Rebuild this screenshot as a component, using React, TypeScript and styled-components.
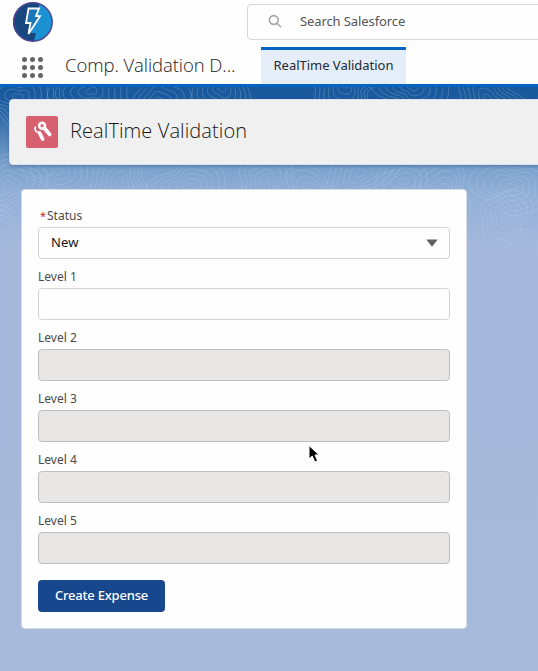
import React from "react";
import styled, { createGlobalStyle } from "styled-components";

const Global = createGlobalStyle`
  * { box-sizing: border-box; }
  html, body { margin: 0; height: 100%; overflow: hidden; }
  body { font-family: "Noto Sans", "Open Sans", sans-serif; font-size: 13px; color: #16325c; }
  button, input { font: inherit; }
`;

const Page = styled.div`
  width: 100%;
  height: 100vh;
  overflow: hidden;
  display: flex;
  flex-direction: column;
`;

const Header = styled.header`
  flex: none;
  height: 87px;
  background: #fefefe;
  border-bottom: 3px solid #0364c4;
  display: flex;
  flex-direction: column;
`;

const TopBar = styled.div`
  height: 47px;
  display: flex;
  align-items: flex-start;
  padding: 2px 0 0 13px;
`;

const Logo = styled.svg`
  width: 40px;
  height: 40px;
  flex: none;
`;

const SearchBox = styled.div`
  flex: none;
  width: 320px;
  height: 36px;
  margin: 2px 0 0 194px;
  padding: 0 0 1px 20px;
  display: flex;
  align-items: center;
  gap: 17px;
  border: 1px solid #d5d6de;
  border-radius: 4px;
  background: #fefefe;
`;

const Fit = styled.span<{ $track?: number }>`
  white-space: nowrap;
  letter-spacing: ${(p) => p.$track ?? 0}px;
`;

const SearchText = styled(Fit)`
  color: #555;
  line-height: 18px;
  padding-bottom: 1px;
`;

const NavBar = styled.nav`
  height: 37px;
  display: flex;
  align-items: stretch;
`;

const Launcher = styled.div`
  display: grid;
  grid-template-columns: repeat(3, 5px);
  grid-auto-rows: 5px;
  gap: 3px;
  margin: 10px 0 0 22px;
  width: 21px;
  height: 21px;
`;

const Dot = styled.i`
  border-radius: 50%;
  background: #666563;
`;

const AppName = styled(Fit)`
  width: 218px;
  padding-left: 22px;
  font-family: "Open Sans", sans-serif;
  font-weight: 300;
  font-size: 18.5px;
  line-height: 36px;
  color: #222;
`;

const Tab = styled.a`
  width: 145px;
  border-top: 3px solid #0364c4;
  background: #e5edf8;
  color: #222a35;
  line-height: 31px;
  text-align: center;
`;

const Main = styled.main`
  position: relative;
  flex: 1;
  background: linear-gradient(#17579b 0, #1c5b9e 14px, #7aa0cb 78px, #91afd6 105px, #a5b8dc 160px, #a7badb 100%);
`;

const Contours = styled.svg`
  position: absolute;
  inset: 0;
  width: 100%;
  height: 200px;
  fill: none;
  stroke: #d5e5f8;
  stroke-width: 0.9;
  mask-image: linear-gradient(#000, #000 65%, transparent);
`;

const PageHeader = styled.section`
  position: relative;
  height: 66px;
  margin: 12px -20px 0 9px;
  padding-left: 16px;
  display: flex;
  align-items: center;
  gap: 12px;
  background: #f0f0f0;
  border: 1px solid #dde3ea;
  border-radius: 4px;
  box-shadow: 0 2px 3px rgba(20, 60, 110, 0.3);
`;

const Tile = styled.svg`
  width: 32px;
  height: 32px;
  flex: none;
`;

const Title = styled.h1`
  margin: -2px 0 0;
  font-family: "Open Sans", sans-serif;
  font-weight: 300;
  font-size: 20px;
  line-height: 28px;
  color: #181818;
`;

const FormCard = styled.form`
  position: relative;
  width: 446px;
  height: 440px;
  margin: 24px 0 0 21px;
  padding: 17px 16px 0;
  background: #fefefe;
  border: 1px solid #d5dce8;
  border-radius: 4px;
`;

const Field = styled.div`
  height: 61px;
`;

const Label = styled.label`
  display: flex;
  height: 20px;
  line-height: 17px;
  font-size: 12px;
  color: #4b4a48;
`;

const Required = styled.abbr`
  width: 9px;
  padding-left: 2px;
  font-size: 11px;
  color: #b72a20;
`;

const Control = styled.div<{ $disabled?: boolean }>`
  height: 32px;
  padding: 0 11px 0 12px;
  display: flex;
  align-items: center;
  justify-content: space-between;
  border: 1px solid ${(p) => (p.$disabled ? "#bfbfc1" : "#d2d3dd")};
  border-radius: 4px;
  background: ${(p) => (p.$disabled ? "#e8e7e6" : "#fefefe")};
  color: #151515;
`;

const Value = styled(Fit)`
  padding-bottom: 2px;
`;

const Submit = styled.button`
  display: block;
  width: 127px;
  height: 32px;
  margin-top: 7px;
  padding: 0 0 1px;
  border: 0;
  border-radius: 4px;
  background: #17488d;
  color: #fff;
  font-size: 13px;
  font-weight: 500;
  line-height: 31px;
`;

const Pointer = styled.svg`
  position: absolute;
  left: 307px;
  top: 444px;
  width: 14px;
  height: 20px;
`;

const hills = [
  [18, 10, 7, 1], [92, 4, 6, 2], [158, 14, 5, 3], [222, 0, 6, 5], [346, -4, 7, 4], [413, 0, 6, 1], [488, 12, 6, 6],
  [8, 98, 6, 3], [58, 84, 5, 1], [120, 96, 6, 5], [190, 100, 6, 2], [264, 92, 5, 4], [312, 106, 5, 6], [360, 86, 6, 3],
  [404, 94, 4, 2], [442, 108, 6, 5], [512, 100, 6, 1], [505, 130, 5, 4], [520, 160, 4, 2], [6, 145, 5, 6],
];

const ring = (cx: number, cy: number, r: number, seed: number) => {
  const points = Array.from({ length: 49 }, (_, i) => {
    const a = (i / 48) * Math.PI * 2;
    const k = r * (1 + 0.2 * Math.sin(2 * a + seed) + 0.13 * Math.cos(3 * a + seed * 2) + 0.06 * Math.sin(5 * a - seed));
    return `${(cx + Math.cos(a) * k * 1.15).toFixed(1)} ${(cy + Math.sin(a) * k).toFixed(1)}`;
  });
  return `M${points.join("L")}Z`;
};

const fields = ["Level 1", "Level 2", "Level 3", "Level 4", "Level 5"];

export default function App() {
  return (
    <Page>
      <Global />
      <Header>
        <TopBar>
          <Logo viewBox="0 0 40 40">
            <circle cx="20" cy="20" r="19.2" fill="#1b91d4" />
            <path d="M26 2A19.2 19.2 0 1 0 21 39L23 31H18L20 25L15 21L17 6H26Z" fill="#184780" />
            <circle cx="20" cy="20" r="19.2" fill="none" stroke="#504590" strokeWidth="1.5" />
            <path d="M15.5 6.5H26L23 14.2H27L15.5 32L17.5 21H13Z" fill="#1c75b6" stroke="#fff" strokeWidth="1.8" />
          </Logo>
          <SearchBox>
            <svg width="15" height="15" viewBox="0 0 15 15" fill="none" stroke="#a7a6a4" strokeWidth="1.6">
              <circle cx="5.8" cy="6" r="4.4" />
              <path d="M9 9.2L12.6 12.8" strokeLinecap="round" />
            </svg>
            <SearchText $track={-0.1}>Search Salesforce</SearchText>
          </SearchBox>
        </TopBar>
        <NavBar>
          <Launcher>{Array.from({ length: 9 }, (_, i) => <Dot key={i} />)}</Launcher>
          <AppName $track={-0.07}>Comp. Validation D...</AppName>
          <Tab><Fit $track={-0.02}>RealTime Validation</Fit></Tab>
        </NavBar>
      </Header>
      <Main>
        <Contours>
          {hills.map(([x, y, count, seed], h) => (
            <g key={h} opacity={y < 20 ? 0.26 : 0.22}>
              {Array.from({ length: count }, (_, i) => <path key={i} d={ring(x, y, 4 + i * 5, seed)} />)}
            </g>
          ))}
        </Contours>
        <PageHeader>
          <Tile viewBox="0 0 32 32">
            <rect width="32" height="32" rx="2" fill="#d7606f" />
            <g fill="none" stroke="#fff" strokeLinecap="round">
              <circle cx="16.1" cy="9.7" r="2.9" strokeWidth="2.6" />
              <path d="M18.5 12.2L23.6 18.4" strokeWidth="3.8" />
              <path d="M9.3 11.3C8.4 13.8 9.6 16 12.5 16.4" strokeWidth="1.8" />
              <path d="M13.6 17L16.7 23.2" strokeWidth="3.6" />
            </g>
          </Tile>
          <Title><Fit $track={0.1}>RealTime Validation</Fit></Title>
        </PageHeader>
        <FormCard>
          <Field>
            <Label><Required>*</Required><Fit>Status</Fit></Label>
            <Control>
              <Value $track={0.15}>New</Value>
              <svg width="12" height="8" viewBox="0 0 12 8"><path d="M0.3 0.4H11.7L6 7.8Z" fill="#60605f" /></svg>
            </Control>
          </Field>
          {fields.map((name, i) => (
            <Field key={name}>
              <Label><Fit>{name}</Fit></Label>
              <Control $disabled={i > 0} />
            </Field>
          ))}
          <Submit type="button"><Fit $track={-0.2}>Create Expense</Fit></Submit>
        </FormCard>
      </Main>
      <Pointer viewBox="0 0 14 20">
        <path d="M2 1.5V15L5.2 12L7.8 18L10.6 16.8L8 11H12Z" fill="#000" stroke="#fff" strokeWidth="1" />
      </Pointer>
    </Page>
  );
}
